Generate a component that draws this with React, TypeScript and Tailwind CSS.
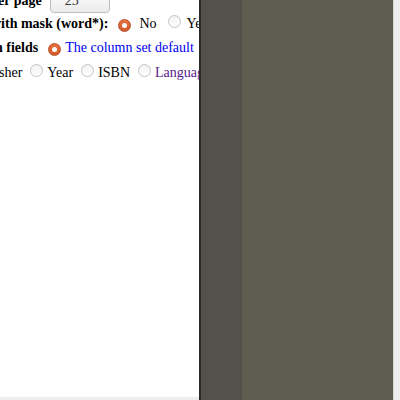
import React from "react";

function Radio({ checked }: { checked?: boolean }) {
  if (checked) {
    return (
      <span className="inline-flex shrink-0 w-[13px] h-[13px] rounded-full bg-gradient-to-b from-[#e8703d] to-[#d45a2a] border border-[#b6502a] items-center justify-center">
        <span className="w-[5px] h-[5px] rounded-full bg-white" />
      </span>
    );
  }
  return (
    <span className="inline-block shrink-0 w-[13px] h-[13px] rounded-full bg-gradient-to-b from-[#f2f2f2] to-white border border-[#c4c4c4]" />
  );
}

export default function App() {
  return (
    <div
      className="flex w-[400px] h-[400px] overflow-hidden"
      style={{ fontFamily: '"Liberation Serif", "Times New Roman", serif' }}
    >
      <div className="w-[199px] h-full bg-white flex flex-col overflow-hidden">
        <div className="flex-1 flex flex-col -mt-[12px] text-[14px] text-black">
          <div className="h-[24px] flex items-center whitespace-nowrap -ml-[2px]">
            <span className="font-bold">er page</span>
            <span className="ml-[8px] w-[60px] h-[26px] rounded-[4px] border border-[#bcbcbc] bg-gradient-to-b from-white to-[#ececec] flex items-center pl-[14px] text-[#333]">
              25
            </span>
          </div>
          <div className="h-[23px] flex items-center whitespace-nowrap -ml-[9px]">
            <span className="font-bold">with mask (word*):</span>
            <span className="ml-[10px]"><Radio checked /></span>
            <span className="ml-[8px]">No</span>
            <span className="ml-[11px]"><Radio /></span>
            <span className="ml-[6px]">Yes</span>
          </div>
          <div className="h-[25px] flex items-center whitespace-nowrap -ml-[5px]">
            <span className="font-bold">n fields</span>
            <span className="ml-[10px]"><Radio checked /></span>
            <span className="ml-[4px] text-[#0000ee]">The column set default</span>
          </div>
          <div className="h-[24px] flex items-center whitespace-nowrap -ml-[1px]">
            <span>sher</span>
            <span className="ml-[8px]"><Radio /></span>
            <span className="ml-[4px]">Year</span>
            <span className="ml-[8px]"><Radio /></span>
            <span className="ml-[4px]">ISBN</span>
            <span className="ml-[8px]"><Radio /></span>
            <span className="ml-[4px] text-[#551a8b]">Language</span>
          </div>
        </div>
        <div className="h-[3px] bg-[#eeeeee] shrink-0" />
      </div>
      <div className="w-[2px] h-full bg-[#2a2a2a]" />
      <div className="w-[41px] h-full bg-[#52524a]" />
      <div className="flex-1 h-full bg-[#5f5d50]" />
      <div className="w-[7px] h-full bg-[#eeeeee] border-l border-[#d8d8d8]" />
    </div>
  );
}
